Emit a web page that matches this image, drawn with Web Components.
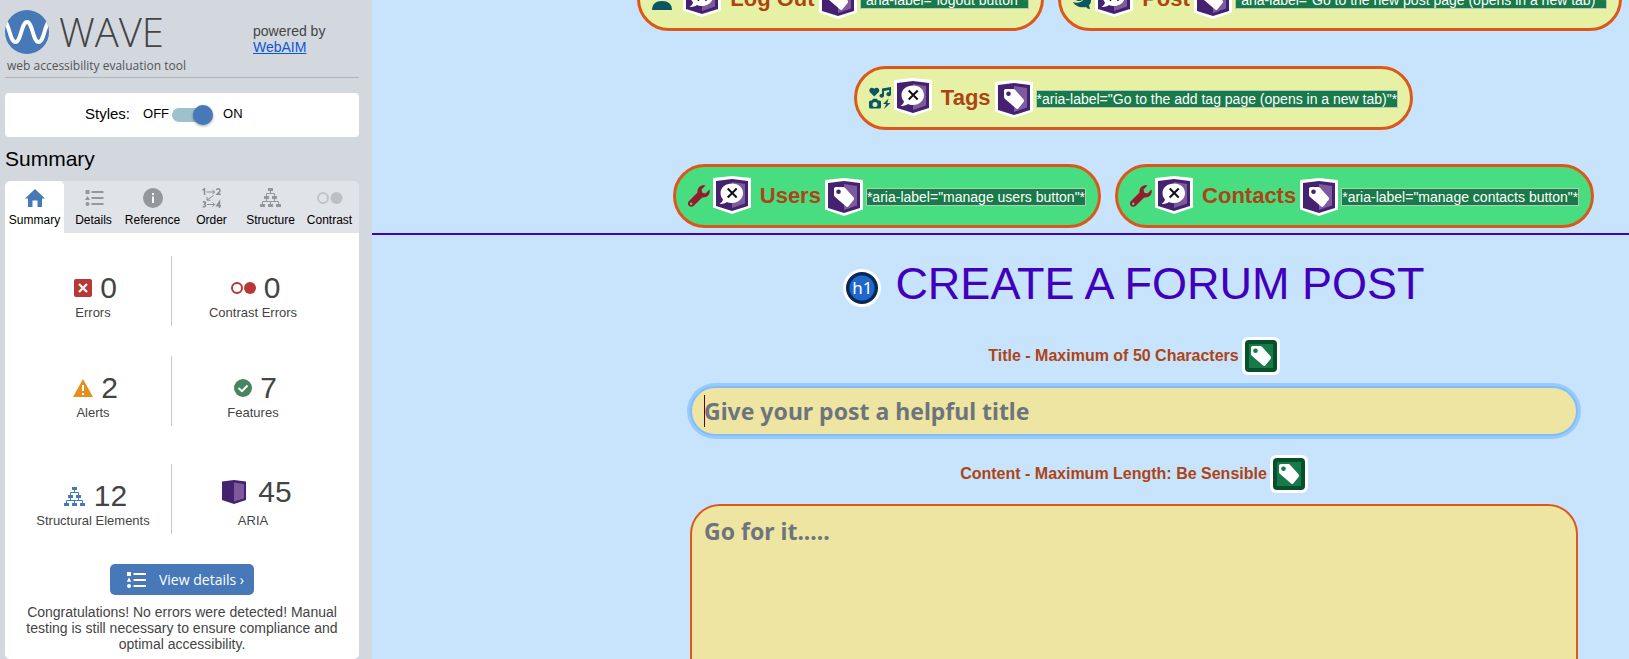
<!DOCTYPE html>
<html lang="en">
<head>
<meta charset="utf-8">
<title>WAVE report - Create a forum post</title>
<style>
  html, body { margin: 0; height: 100%; }
  body {
    display: grid;
    grid-template-columns: 372px 1fr;
    grid-template-rows: 100vh;
    overflow: hidden;
    font-family: "Liberation Sans", Arial, sans-serif;
    background: #c8e3fc;
  }
</style>
</head>
<body>

<wave-sidebar></wave-sidebar>
<forum-page></forum-page>

<template id="t-sidebar">
  <style>
    :host { display: flex; flex-direction: column; box-sizing: border-box; min-width: 0; padding: 0 13px 0 5px; background: #d3d8df; color: #444; overflow: hidden; }
    header { display: flex; justify-content: space-between; box-sizing: border-box; height: 78px; padding-top: 10px; border-bottom: 1px solid #b1b5b9; }
    .brand { display: flex; align-items: center; gap: 10px; height: 44px; font: 300 40px/44px "Open Sans", sans-serif; }
    .brand svg { width: 44px; height: 44px; }
    .tagline { margin: 0 0 0 2px; font: 12px/24px "Open Sans", sans-serif; color: #555; }
    .by { width: 106px; margin: 13px 0 0; font-size: 14px; line-height: 16px; }
    .by a { display: block; color: #0b57d0; }
    .styles { display: flex; align-items: center; box-sizing: border-box; height: 44px; margin-top: 15px; padding: 0 0 3px 80px; border-radius: 4px; background: #fff; color: #000; font-size: 13px; }
    .styles label { margin-right: 13px; font-size: 15px; }
    .styles input { appearance: none; position: relative; width: 41px; height: 14px; margin: 2px 10px 0 3px; border-radius: 7px; background: linear-gradient(90deg, #9fc1cb 36px, transparent 36px); }
    .styles input::before { content: ""; position: absolute; right: 0; top: -3px; width: 20px; height: 20px; border-radius: 50%; background: #4778b7; box-shadow: 0 1px 3px rgba(0,0,0,.4); }
    h2 { margin: 0; font-size: 21px; font-weight: 400; line-height: 44px; color: #000; }
    nav { display: grid; grid-template-columns: repeat(6, 1fr); height: 52px; border-radius: 5px 5px 0 0; background: #e0e3e7; overflow: hidden; flex: none; }
    .panel { flex: 1; display: flex; flex-direction: column; align-items: center; padding: 23px 0 0; border-radius: 0 0 5px 5px; background: #fff; }
    .stats { display: grid; grid-template-columns: 156px 163px; gap: 30px 0; align-self: flex-start; margin-left: 10px; }
    .last { margin-top: 8px; }
    button { display: flex; align-items: center; gap: 13px; height: 31px; margin-top: 30px; padding: 0 10px 0 17px; border: 0; border-radius: 5px; background: #4778b7; color: #fff; font: 14px "Open Sans", sans-serif; }
    button svg { width: 19px; height: 16px; }
    .done { margin: 9px 20px 0; font-size: 14px; line-height: 16px; text-align: center; }
  </style>
  <header>
    <div>
      <div class="brand">
        <svg viewBox="0 0 44 44"><defs><clipPath id="c"><circle cx="22" cy="22" r="22"/></clipPath></defs><circle cx="22" cy="22" r="22" fill="#4778b7"/><path clip-path="url(#c)" d="M0 11C5 17 5 32 10.500 32S16.500 12 22 12S28 32 33.500 32S39 17 44 11" fill="none" stroke="#fff" stroke-width="4"/></svg>
        <span>WAVE</span>
      </div>
      <p class="tagline">web accessibility evaluation tool</p>
    </div>
    <p class="by">powered by <a href="#webaim">WebAIM</a></p>
  </header>
  <div class="styles"><label for="sw">Styles:</label><span>OFF</span><input id="sw" type="checkbox" role="switch" checked><span>ON</span></div>
  <h2>Summary</h2>
  <nav role="tablist">
    <wave-tab active label="Summary"><svg width="20" height="18" viewBox="0 0 20 18"><path d="M10 0L20 9.500H17V18H12.500V11.500H7.500V18H3V9.500H0Z" fill="#4778b7"/></svg></wave-tab>
    <wave-tab label="Details"><svg width="20" height="16" viewBox="0 0 19 16" fill="#94979b"><path d="M1 0h4v4H1zM3 6l2.500 4h-5zM7 1h12v2H7zM7 7h12v2H7zM7 13h12v2H7z"/><circle cx="3" cy="14" r="2"/></svg></wave-tab>
    <wave-tab label="Reference"><svg width="20" height="20" viewBox="0 0 20 20"><circle cx="10" cy="10" r="10" fill="#94979b"/><path d="M9 5h2v2H9zM9 8.500h2v6.500H9z" fill="#fff"/></svg></wave-tab>
    <wave-tab label="Order"><svg width="20" height="20" viewBox="0 0 20 20" fill="none" stroke="#8b8f93"><path d="M.5 2.200L2.500.8V7M14.500 2C15 .3 18.500.5 18 2.800C17.700 4.300 15.500 5.500 15 6.300H18.800M.8 14C4 12.800 4 16 1.800 16.200C4.500 16.200 4 19.500.6 18.600M17.500 20V13.800L14.800 17.800H19" stroke-width="1.500"/><path d="M4.500 4h8M10.500 1.800L12.700 4l-2.200 2.200M11.500 7.500L5 12M5 9v3.200H8.500M5 16.500h7.500M10.500 14.300l2.200 2.200-2.200 2.200"/></svg></wave-tab>
    <wave-tab label="Structure"><svg width="22" height="20" viewBox="0 0 22 20"><g fill="#94979b"><path d="M8 0h5v3H8zM4 8h5v3H4zM12 8h5v3h-5zM0 16h5v3H0zM8 16h5v3H8zM16 16h5v3h-5z"/><path d="M10.500 3v3M6.500 8V5.500h8V8M6.500 11v2.500M14.500 11v2.500M2.500 16v-2.500h16V16M10.500 13.500V16" fill="none" stroke="#94979b"/></g></svg></wave-tab>
    <wave-tab label="Contrast"><svg width="26" height="12" viewBox="0 0 26 12"><circle cx="6" cy="6" r="5" fill="none" stroke="#c0c3c7" stroke-width="2"/><circle cx="19.500" cy="6" r="6" fill="#bcc0c4"/></svg></wave-tab>
  </nav>
  <div class="panel">
    <div class="stats">
      <wave-stat count="0" label="Errors"><svg width="18" height="18" viewBox="0 0 18 18"><rect width="18" height="18" rx="2" fill="#bb3637"/><path d="M5 5l8 8M13 5l-8 8" stroke="#fff" stroke-width="2.200"/></svg></wave-stat>
      <wave-stat ruled count="0" label="Contrast Errors"><svg width="25" height="12" viewBox="0 0 25 12"><circle cx="6" cy="6" r="5" fill="#fff" stroke="#bb3637" stroke-width="2"/><circle cx="19" cy="6" r="6" fill="#bb3637"/></svg></wave-stat>
      <wave-stat count="2" label="Alerts"><svg width="20" height="18" viewBox="0 0 20 18"><path d="M10 0l10 18H0z" fill="#e58f1c"/><path d="M9 6h2v6H9zM9 14h2v2H9z" fill="#fff"/></svg></wave-stat>
      <wave-stat ruled count="7" label="Features"><svg width="18" height="18" viewBox="0 0 18 18"><circle cx="9" cy="9" r="9" fill="#47855f"/><path d="M4.500 9l3.500 3.200L13.500 6.500" fill="none" stroke="#fff" stroke-width="2"/></svg></wave-stat>
      <wave-stat class="last" count="12" label="Structural Elements"><svg width="22" height="20" viewBox="0 0 22 20"><g fill="#4778b7"><path d="M8 1h5v3H8zM4 9h5v3H4zM12 9h5v3h-5zM0 17h5v3H0zM8 17h5v3H8zM16 17h5v3h-5z"/><path d="M10.500 4v3M6.500 9V6.500h8V9M6.500 12v2.500M14.500 12v2.500M2.500 17v-2.500h16V17M10.500 14.500V17" fill="none" stroke="#4778b7"/></g></svg></wave-stat>
      <wave-stat class="last" ruled raised count="45" label="ARIA"><svg width="28" height="24" viewBox="0 0 28 24"><path d="M0 1.500L12 0l12 1.500V20L12 24 0 20z" fill="#45226f"/><path d="M12 2.500L22 4v14.500L12 21.500z" fill="#7d5a9d"/></svg></wave-stat>
    </div>
    <button type="button"><svg viewBox="0 0 19 16" fill="#fff"><path d="M0 0h4v4H0zM2 5.500l2.300 4.200h-4.600zM6.500 1H19v2H6.500zM6.500 7H19v2H6.500zM6.500 13H19v2H6.500z"/><circle cx="2" cy="14" r="2"/></svg>View details ›</button>
    <p class="done">Congratulations! No errors were detected! Manual testing is still necessary to ensure compliance and optimal accessibility.</p>
  </div>
</template>

<template id="t-tab">
  <style>
    :host { display: block; min-width: 0; }
    button { display: grid; grid-template-rows: 34px 18px; justify-items: center; align-items: center; width: 100%; height: 52px; padding: 0; border: 0; background: none; color: #000; font: 12px/14px "Liberation Sans", Arial, sans-serif; white-space: nowrap; }
    b { font-weight: 400; align-self: start; margin-top: -2px; }
    :host([active]) button { background: #fff; border-radius: 5px 5px 0 0; }
    ::slotted(svg) { display: block; }
  </style>
  <button type="button" role="tab"><slot></slot><b></b></button>
</template>

<template id="t-stat">
  <style>
    :host { display: block; box-sizing: border-box; height: 70px; padding-top: 14px; text-align: center; }
    :host([ruled]) { border-left: 1px solid #c6c6c6; }
    .n { display: flex; justify-content: center; align-items: center; gap: 8px; height: 36px; padding-left: 5px; font-size: 30px; }
    :host([raised]) .n { height: 28px; padding-bottom: 8px; padding-left: 8px; }
    .l { font-size: 13px; line-height: 14px; }
    ::slotted(svg) { display: block; }
  </style>
  <div class="n"><slot></slot><span></span></div>
  <div class="l"></div>
</template>

<template id="t-speech">
  <style>:host { display: block; flex: none; width: 38px; height: 38px; } svg { display: block; }</style>
  <svg width="38" height="38" viewBox="0 0 38 38"><path d="M0 2L19 0l19 2v29.500L19 38 0 31.500z" fill="#fff"/><path d="M3 5l16-2 16 2v25l-16 5-16-5z" fill="#45226f"/><path d="M19 6l13 2v19.500L19 32z" fill="#7d5a9d"/><path d="M19 7.500c6.500 0 11 4 11 9.500S25.500 27 19 27c-2 0-3.500-.3-5-1-2 1.500-4.500 2-7.500 2 2-1.200 3-2.500 3.500-4.500-1.600-1.800-2.500-4-2.500-6.500 0-5.500 5-9.500 11.500-9.500z" fill="#fff"/><path d="M14.700 12.500l9 9M23.700 12.500l-9 9" stroke="#111" stroke-width="2"/></svg>
</template>

<template id="t-tag">
  <style>
    :host { display: block; flex: none; width: 38px; height: 38px; } svg { display: block; }
    .green { display: none; }
    :host([kind="label"]) .green { display: inline; }
    :host([kind="label"]) .purple { display: none; }
  </style>
  <svg width="38" height="38" viewBox="0 0 38 38">
    <g class="purple"><path d="M0 2L19 0l19 2v29.500L19 38 0 31.500z" fill="#fff"/><path d="M3 5l16-2 16 2v25l-16 5-16-5z" fill="#45226f"/><path d="M19 6l13 2v19.500L19 32z" fill="#7d5a9d"/></g>
    <g class="green"><rect width="38" height="38" rx="6" fill="#fff"/><rect x="3" y="3" width="32" height="32" rx="4" fill="#06502c"/><rect x="7" y="7" width="24" height="24" fill="#177a48"/></g>
    <path fill-rule="evenodd" fill="#fff" d="M11 9h7c1 0 1.500.3 2 .8l8.500 9.500c.8.900.8 1.700.1 2.600l-5.300 6.600c-.7.700-1.400.8-2.200.100L9.800 18.800c-.5-.4-.8-1-.8-1.800v-6c0-1.300.7-2 2-2zm2.500 2.500a2.300 2.300 0 1 0 0 4.600 2.300 2.300 0 0 0 0-4.600z"/>
  </svg>
</template>

<template id="t-pill">
  <style>
    :host { display: block; }
    a { display: flex; align-items: center; box-sizing: border-box; height: 64px; padding: 0 12px; border: 3px solid #dc581a; border-radius: 32px; background: #e6f1a5; color: #ac4516; text-decoration: none; white-space: nowrap; }
    :host([admin]) a { background: #48dd80; }
    ::slotted(svg) { display: block; margin-right: 3px; }
    .text { margin: 0 4px 0 9px; font-size: 22px; font-weight: 700; }
    .aria { margin: 2px 0 0 3px; border: 1px solid #b9c4bd; background: #177a48; color: #fff; font-size: 14px; line-height: 16px; }
    .icon { margin-bottom: 2px; }
    tag-badge { margin-top: 2px; }
  </style>
  <a href="#page"><slot></slot><speech-badge class="icon"></speech-badge><span class="text"></span><tag-badge></tag-badge><span class="aria"></span></a>
</template>

<template id="t-forum">
  <style>
    :host { display: block; min-width: 0; overflow: hidden; }
    nav { display: flex; flex-direction: column; gap: 34px; margin-top: -33px; padding: 0 0 5px 266px; border-bottom: 2px solid #4100bb; }
    .row { display: flex; justify-content: center; gap: 14px; }
    .account { padding: 0 8px 1px 0; }
    main { padding: 26px 51px 0 318px; }
    .head { display: flex; justify-content: center; align-items: flex-end; gap: 14px; }
    h1 { margin: 0; font-size: 45px; font-weight: 400; line-height: 46px; color: #4100bb; white-space: nowrap; }
    .mark { display: grid; place-items: center; box-sizing: border-box; width: 38px; height: 38px; border: 3px solid #fff; border-radius: 50%; background: radial-gradient(circle, #2067cb 12px, #06295a 13px); color: #fff; font: 17px/30px "Noto Sans", sans-serif; }
    label { display: flex; justify-content: center; align-items: center; gap: 3px; margin: 19px 0 11px; color: #ac4516; font-size: 16px; font-weight: 700; }
    .head + label { margin-top: 30px; }
    input, textarea { display: block; box-sizing: border-box; width: 100%; margin: 0; padding: 7px 12px; border: 2px solid #dc581a; border-radius: 30px; outline: 0; background: #efe5a2; color: #600; font: 700 23px/36px "Noto Sans", sans-serif; resize: none; }
    input { height: 50px; border-color: #80bdff; box-shadow: 0 0 0 3px #99caff; }
    textarea { height: 240px; }
    ::placeholder { color: #6c757d; opacity: 1; }
    .field { position: relative; }
    .caret { position: absolute; left: 14px; top: 9px; width: 1px; height: 32px; background: #600; }
  </style>
  <nav>
    <div class="row account">
      <nav-pill text="Log Out" aria="logout button"><svg width="28" height="24" viewBox="0 0 28 24" fill="#0b5663"><circle cx="10" cy="7" r="6"/><path d="M0 23c0-6 4-9 10-9s10 3 10 9z"/></svg></nav-pill>
      <nav-pill text="Post" aria="Go to the new post page (opens in a new tab)"><svg width="19" height="22" viewBox="0 0 19 22" fill="#0b5663"><ellipse cx="6" cy="7" rx="6" ry="6"/><path d="M0 14c7 3 13-3 13-8 3 1 5 4 5 7 0 2-1 3-2 4l1 4c-2 0-3-1-4-2-6 1-11-1-13-5z"/></svg></nav-pill>
    </div>
    <div class="row">
      <nav-pill text="Tags" aria="Go to the add tag page (opens in a new tab)"><svg width="22" height="22" viewBox="0 0 22 22" fill="#0b5663"><path d="M5.200 9.500L.8 5C-.8 2.500 2-1 5.200 1.800 8.500-1 11.500 2.500 9.800 5z"/><path d="M13 1.500L22 0v7.200a2.300 2 0 1 1-1.800-2V3L15 4v4.700a2.300 2 0 1 1-2-2z"/><path fill-rule="evenodd" d="M1.500 13.500H3l1-1.700h4l1 1.700h1.500q1.500 0 1.500 1.500v5q0 1.500-1.500 1.500h-9Q0 21.500 0 20v-5q0-1.500 1.500-1.500zM6 15a2.500 2.500 0 1 0 0 5 2.500 2.500 0 0 0 0-5z"/><path d="M19.500 11.500L14 17h3.200L15 22l6.500-6h-3.200z"/></svg></nav-pill>
    </div>
    <div class="row">
      <nav-pill admin text="Users" aria="manage users button"><svg width="22" height="22" viewBox="0 0 22 22"><path fill-rule="evenodd" fill="#951b2b" d="M21.500 4.500l-4 4-3.200-.8-.8-3.200 4-4c-4-1.200-8.500 1.500-8 7L1 16c-1.500 1.700-1.300 3.600-.2 4.800 1.300 1.400 3.500 1.300 5-.1l8.400-8.300c5 .7 8.500-3.400 7.300-7.900zM3.200 17.500a1.200 1.200 0 1 1 0 2.400 1.200 1.200 0 0 1 0-2.400z"/></svg></nav-pill>
      <nav-pill admin text="Contacts" aria="manage contacts button"><svg width="22" height="22" viewBox="0 0 22 22"><path fill-rule="evenodd" fill="#951b2b" d="M21.500 4.500l-4 4-3.200-.8-.8-3.200 4-4c-4-1.200-8.500 1.500-8 7L1 16c-1.500 1.700-1.300 3.600-.2 4.800 1.300 1.400 3.500 1.300 5-.1l8.400-8.300c5 .7 8.500-3.400 7.300-7.900zM3.200 17.500a1.200 1.200 0 1 1 0 2.400 1.200 1.200 0 0 1 0-2.400z"/></svg></nav-pill>
    </div>
  </nav>
  <main>
    <div class="head"><span class="mark">h1</span><h1>CREATE A FORUM POST</h1></div>
    <label for="title"><span>Title - Maximum of 50 Characters</span><tag-badge kind="label"></tag-badge></label>
    <div class="field"><input id="title" type="text" maxlength="50" placeholder="Give your post a helpful title"><span class="caret"></span></div>
    <label for="content"><span>Content - Maximum Length: Be Sensible</span><tag-badge kind="label"></tag-badge></label>
    <textarea id="content" placeholder="Go for it....."></textarea>
  </main>
</template>

<script>
  class TemplateElement extends HTMLElement {
    constructor() {
      super();
      const source = document.getElementById(this.constructor.template);
      this.attachShadow({ mode: "open" }).append(source.content.cloneNode(true));
    }
    fill(selector, text) { this.shadowRoot.querySelector(selector).textContent = text; }
  }
  customElements.define("speech-badge", class extends TemplateElement { static template = "t-speech"; });
  customElements.define("tag-badge", class extends TemplateElement { static template = "t-tag"; });
  customElements.define("wave-tab", class extends TemplateElement {
    static template = "t-tab";
    connectedCallback() {
      this.fill("b", this.getAttribute("label"));
      this.shadowRoot.querySelector("button").setAttribute("aria-selected", this.hasAttribute("active"));
    }
  });
  customElements.define("wave-stat", class extends TemplateElement {
    static template = "t-stat";
    connectedCallback() {
      this.fill("span", this.getAttribute("count"));
      this.fill(".l", this.getAttribute("label"));
    }
  });
  customElements.define("nav-pill", class extends TemplateElement {
    static template = "t-pill";
    connectedCallback() {
      this.fill(".text", this.getAttribute("text"));
      this.fill(".aria", `*aria-label="${this.getAttribute("aria")}"*`);
    }
  });
  customElements.define("wave-sidebar", class extends TemplateElement { static template = "t-sidebar"; });
  customElements.define("forum-page", class extends TemplateElement { static template = "t-forum"; });
</script>
</body>
</html>
